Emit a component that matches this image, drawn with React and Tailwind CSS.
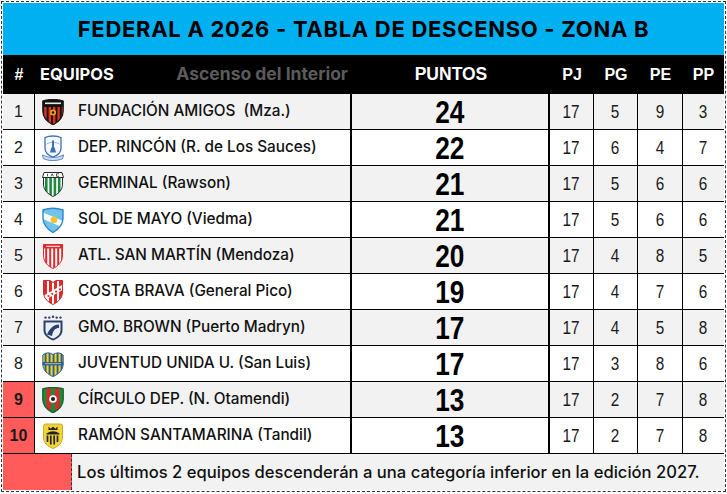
const teams = [
  { n: 1, name: 'FUNDACIÓN AMIGOS  (Mza.)', pts: 24, pj: 17, pg: 5, pe: 9, pp: 3, logo: 'amigos' },
  { n: 2, name: 'DEP. RINCÓN (R. de Los Sauces)', pts: 22, pj: 17, pg: 6, pe: 4, pp: 7, logo: 'rincon' },
  { n: 3, name: 'GERMINAL (Rawson)', pts: 21, pj: 17, pg: 5, pe: 6, pp: 6, logo: 'germinal' },
  { n: 4, name: 'SOL DE MAYO (Viedma)', pts: 21, pj: 17, pg: 5, pe: 6, pp: 6, logo: 'sol' },
  { n: 5, name: 'ATL. SAN MARTÍN (Mendoza)', pts: 20, pj: 17, pg: 4, pe: 8, pp: 5, logo: 'sanmartin' },
  { n: 6, name: 'COSTA BRAVA (General Pico)', pts: 19, pj: 17, pg: 4, pe: 7, pp: 6, logo: 'costa' },
  { n: 7, name: 'GMO. BROWN (Puerto Madryn)', pts: 17, pj: 17, pg: 4, pe: 5, pp: 8, logo: 'brown' },
  { n: 8, name: 'JUVENTUD UNIDA U. (San Luis)', pts: 17, pj: 17, pg: 3, pe: 8, pp: 6, logo: 'juventud' },
  { n: 9, name: 'CÍRCULO DEP. (N. Otamendi)', pts: 13, pj: 17, pg: 2, pe: 7, pp: 8, logo: 'circulo', down: true },
  { n: 10, name: 'RAMÓN SANTAMARINA (Tandil)', pts: 13, pj: 17, pg: 2, pe: 7, pp: 8, logo: 'santamarina', down: true },
];

const shield = 'M0.8 2 C6 0 16 0 21.2 2 L21.2 12 C21.2 19 16.5 23 11 25.8 C5.5 23 0.8 19 0.8 12 Z';

function Stripes({ xs, w, color, y = 0 }) {
  return xs.map((x) => <rect key={x} x={x} y={y} width={w} height={26} fill={color} />);
}

function Logo({ kind }) {
  const id = 'clip-' + kind;
  let body = null;
  if (kind === 'amigos') {
    body = (
      <>
        <clipPath id={id}><path d={shield} /></clipPath>
        <g clipPath={`url(#${id})`}>
          <rect width="22" height="26" fill="#151515" />
          <Stripes xs={[2.2, 6.6, 11, 15.4, 19.8]} w={2.4} color="#e0301e" y={8} />
          <rect width="22" height="8" fill="#111" />
          <rect x="3" y="3.5" width="16" height="1.6" fill="#e8e8e8" />
          <circle cx="11" cy="13.5" r="3" fill="#f0a21c" />
          <circle cx="11" cy="13.5" r="1.3" fill="#151515" />
        </g>
        <path d={shield} fill="none" stroke="#1a1a1a" strokeWidth="1.2" />
      </>
    );
  } else if (kind === 'rincon') {
    const p = 'M3 2.5 C7.5 0.5 14.5 0.5 19 2.5 L19 13 C19 18 15.5 20.5 11 22 C6.5 20.5 3 18 3 13 Z';
    body = (
      <>
        <path d={p} fill="#f4f8ff" stroke="#3b6fb6" strokeWidth="1.3" />
        <path d="M4.5 9 Q11 5.5 17.5 9" fill="none" stroke="#8fb3e0" strokeWidth="0.9" />
        <rect x="10" y="5.5" width="2" height="11" fill="#3b6fb6" />
        <path d="M8 17.5 L14 17.5 L12.7 12.5 L9.3 12.5 Z" fill="#3b6fb6" />
        <path d="M0.3 20 Q11 25 21.7 20 L20.5 23.8 Q11 27.5 1.5 23.8 Z" fill="#cfdcf2" stroke="#3b6fb6" strokeWidth="0.8" />
      </>
    );
  } else if (kind === 'germinal') {
    const p = 'M1.5 6 L20.5 6 L20.5 13 C20.5 19.5 16 23 11 25.5 C6 23 1.5 19.5 1.5 13 Z';
    body = (
      <>
        <clipPath id={id}><path d={p} /></clipPath>
        <g clipPath={`url(#${id})`}>
          <rect width="22" height="26" fill="#fff" />
          <Stripes xs={[3, 7.3, 11.6, 15.9]} w={2.6} color="#1b8c3e" />
        </g>
        <path d={p} fill="none" stroke="#2a2a2a" strokeWidth="1" />
        <path d="M0.5 6.5 L2 1.5 L20 1.5 L21.5 6.5 Z" fill="#fff" stroke="#2a2a2a" strokeWidth="1" />
        <path d="M5.5 5.3 L5.5 2.8 M9 5.3 L10.2 2.8 L11.4 5.3 M14.5 2.8 L17 2.8 M14.5 5.3 L17 5.3 M14.5 2.8 L14.5 5.3" stroke="#2a2a2a" strokeWidth="0.8" fill="none" />
      </>
    );
  } else if (kind === 'sol') {
    const p = 'M1 3 Q11 -0.5 21 3 L21 11 C21 18.5 16 22.5 11 25.5 C6 22.5 1 18.5 1 11 Z';
    body = (
      <>
        <clipPath id={id}><path d={p} /></clipPath>
        <g clipPath={`url(#${id})`}>
          <rect width="22" height="26" fill="#72c3ec" />
          <path d="M0 5 L22 14.5 L22 21 L0 11.5 Z" fill="#fff" />
          <circle cx="12" cy="12.8" r="3.4" fill="#f3c333" />
        </g>
        <path d={p} fill="none" stroke="#2f86c8" strokeWidth="1.4" />
      </>
    );
  } else if (kind === 'sanmartin') {
    const p = 'M1.5 1.5 L20.5 1.5 L20.5 12 C20.5 19.5 16 23 11 25.5 C6 23 1.5 19.5 1.5 12 Z';
    body = (
      <>
        <clipPath id={id}><path d={p} /></clipPath>
        <g clipPath={`url(#${id})`}>
          <rect width="22" height="26" fill="#fff" />
          <Stripes xs={[3.2, 7.2, 11.2, 15.2, 19.2]} w={2} color="#e3282d" />
          <rect y="1" width="22" height="4.5" fill="#e3282d" />
          <rect x="4" y="2.8" width="14" height="1" fill="#fff" />
        </g>
        <path d={p} fill="none" stroke="#e3282d" strokeWidth="1" />
      </>
    );
  } else if (kind === 'costa') {
    const p = 'M1.5 1.5 L8 1.5 L11 3.5 L14 1.5 L20.5 1.5 L20.5 13 C20.5 19.5 16 23 11 25.5 C6 23 1.5 19.5 1.5 13 Z';
    body = (
      <>
        <clipPath id={id}><path d={p} /></clipPath>
        <g clipPath={`url(#${id})`}>
          <rect width="22" height="26" fill="#e12a2a" />
          <Stripes xs={[5, 10, 15]} w={2} color="#fff" />
          <path d="M0 17.5 L21 5.5 L23 9.5 L2 21.5 Z" fill="#fff" />
          <circle cx="6.5" cy="17" r="1.1" fill="#e12a2a" />
          <circle cx="10.3" cy="14.8" r="1.1" fill="#e12a2a" />
          <circle cx="14.1" cy="12.6" r="1.1" fill="#e12a2a" />
          <circle cx="17.9" cy="10.4" r="1.1" fill="#e12a2a" />
        </g>
        <path d={p} fill="none" stroke="#c41e1e" strokeWidth="0.9" />
      </>
    );
  } else if (kind === 'brown') {
    const p = 'M1.5 5.5 L20.5 5.5 L20.5 15 C20.5 20.5 16 23.5 11 25.5 C6 23.5 1.5 20.5 1.5 15 Z';
    body = (
      <>
        {[3.5, 7.3, 11, 14.7, 18.5].map((x, i) => (
          <circle key={x} cx={x} cy={i === 2 ? 1.8 : 2.6} r="1.2" fill="#2d3f6d" />
        ))}
        <path d={p} fill="#2d3f6d" />
        <path d="M3.5 7.5 L18.5 7.5 L18.5 15 C18.5 19.5 15 22 11 23.5 C7 22 3.5 19.5 3.5 15 Z" fill="#e9eef6" />
        <path d="M5 19.5 C7.5 14 11 9.5 17 9.5 L17 13 C13 13 11 15.5 10 21 Z" fill="#2d3f6d" />
        <circle cx="13" cy="12.5" r="1.4" fill="#2d3f6d" />
      </>
    );
  } else if (kind === 'juventud') {
    const p = 'M0.8 4 Q5.5 0 11 3.5 Q16.5 0 21.2 4 L21.2 13 C21.2 19.5 16.5 23 11 25.6 C5.5 23 0.8 19.5 0.8 13 Z';
    body = (
      <>
        <clipPath id={id}><path d={p} /></clipPath>
        <g clipPath={`url(#${id})`}>
          <rect width="22" height="26" fill="#f4d70f" />
          <Stripes xs={[2.6, 6.6, 10.6, 14.6, 18.6]} w={1.9} color="#2c5da8" />
          <rect y="11" width="22" height="3.4" fill="#2c5da8" />
          <rect x="3" y="12.3" width="16" height="0.8" fill="#f4d70f" />
        </g>
        <path d={p} fill="none" stroke="#2c5da8" strokeWidth="1" />
      </>
    );
  } else if (kind === 'circulo') {
    body = (
      <>
        <clipPath id={id}><path d={shield} /></clipPath>
        <g clipPath={`url(#${id})`}>
          <rect width="22" height="26" fill="#1d8a3c" />
          <Stripes xs={[4.5, 13]} w={4.5} color="#d9292b" />
        </g>
        <path d={shield} fill="none" stroke="#17672d" strokeWidth="1.4" />
        <circle cx="11" cy="12" r="3.8" fill="#fff" />
        <circle cx="11" cy="12" r="2" fill="#1a1a1a" />
      </>
    );
  } else if (kind === 'santamarina') {
    const p = 'M1.5 3 Q1.5 1 3.5 1 L18.5 1 Q20.5 1 20.5 3 L20.5 14 C20.5 20.5 16 23.5 11 25.5 C6 23.5 1.5 20.5 1.5 14 Z';
    body = (
      <>
        <path d={p} fill="#f1d43c" stroke="#c7a618" strokeWidth="0.9" />
        <path d="M6.5 3.5 L8.7 5.8 L11 3.5 L13.3 5.8 L15.5 3.5 L15.5 7 L6.5 7 Z" fill="#222" />
        <path d="M4.5 10.5 Q11 6 17.5 10.5 L17.5 11.5 L4.5 11.5 Z" fill="#222" />
        <path d="M5.5 12.5 L5.5 19 M8.8 12.5 L8.8 21.5 M12.2 12.5 L12.2 21.5 M15.5 12.5 L15.5 19" stroke="#222" strokeWidth="1.7" />
      </>
    );
  }
  return (
    <svg viewBox="0 0 22 26" className="w-[22px] h-[26px] shrink-0">
      {body}
    </svg>
  );
}

function Row({ t }) {
  const bg = t.n % 2 === 1 ? 'bg-[#f2f2f2]' : 'bg-white';
  return (
    <div className={`flex h-[36px] border-b border-black ${bg}`}>
      <div
        className={`w-[32px] flex items-center justify-center border-r border-black font-['Liberation_Sans',Arial,sans-serif] text-[16px] text-[#1a1a1a] ${
          t.down ? 'bg-[#ff5b5b] font-bold' : ''
        }`}
      >
        {t.n}
      </div>
      <div className="w-[317px] flex items-center border-r-2 border-black pl-[7px]">
        <Logo kind={t.logo} />
        <span className="ml-[14px] whitespace-pre font-['Inter',sans-serif] font-[450] text-[15.3px] text-[#111]">
          {t.name}
        </span>
      </div>
      <div className="w-[198px] flex items-center justify-center border-r-2 border-black">
        <span className="inline-block scale-x-[0.82] font-['Liberation_Sans',Arial,sans-serif] font-bold text-[32px] leading-none text-black">
          {t.pts}
        </span>
      </div>
      {[t.pj, t.pg, t.pe, t.pp].map((v, i) => (
        <div
          key={i}
          className={`${['w-[44px]', 'w-[44px]', 'w-[45px]', 'w-[41px]'][i]} flex items-center justify-center ${
            i < 3 ? 'border-r border-black' : ''
          }`}
        >
          <span className="inline-block scale-x-[0.85] font-['Liberation_Sans',Arial,sans-serif] text-[18px] leading-none text-[#1a1a1a]">
            {v}
          </span>
        </div>
      ))}
    </div>
  );
}

export default function App() {
  return (
    <div className="w-[727px] h-[494px] bg-white pt-px pl-px overflow-hidden">
      <div className="w-[725px] border border-dashed border-[#333] p-px flex flex-col">
        <div className="h-[52px] bg-[#00b0f0] flex items-center justify-center">
          <h1 className="font-['Inter',sans-serif] font-bold text-[22px] text-black tracking-[0.7px]">
            FEDERAL A 2026 - TABLA DE DESCENSO - ZONA B
          </h1>
        </div>
        <div className="h-[39px] bg-black flex items-center text-white">
          <div className="w-[32px] text-center font-['Liberation_Sans',Arial,sans-serif] font-bold text-[16px]">#</div>
          <div className="w-[317px] flex items-center justify-between pl-[5px] pr-[4px] font-['Inter',sans-serif] font-bold text-[16.5px]">
            <span>EQUIPOS</span>
            <span className="text-[#5b5b5b] text-[17.5px]">Ascenso del Interior</span>
          </div>
          <div className="w-[198px] text-center font-['Liberation_Sans',Arial,sans-serif] font-bold text-[17.5px]">PUNTOS</div>
          {['PJ', 'PG', 'PE', 'PP'].map((h, i) => (
            <div
              key={h}
              className={`${['w-[44px]', 'w-[44px]', 'w-[45px]', 'w-[41px]'][i]} text-center font-['Liberation_Sans',Arial,sans-serif] font-bold text-[16px]`}
            >
              {h}
            </div>
          ))}
        </div>
        {teams.map((t) => (
          <Row key={t.n} t={t} />
        ))}
        <div className="h-[36px] flex">
          <div className="w-[69px] bg-[#ff5b5b] border-r border-dashed border-[#333]" />
          <div className="flex-1 bg-[#f2f2f2] flex items-center pl-[5px] font-['Inter',sans-serif] font-[450] text-[16.6px] text-[#111]">
            Los últimos 2 equipos descenderán a una categoría inferior en la edición 2027.
          </div>
        </div>
      </div>
    </div>
  );
}
